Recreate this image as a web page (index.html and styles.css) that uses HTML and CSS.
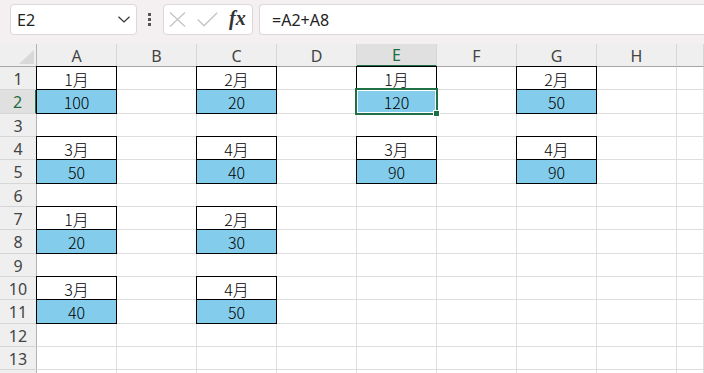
FILE: index.html
```html
<!DOCTYPE html>
<html lang="zh-CN">
<head>
<meta charset="UTF-8">
<meta name="viewport" content="width=device-width, initial-scale=1.0">
<title>工作表</title>
<link rel="stylesheet" href="styles.css">
</head>
<body>

<div class="toolbar">
    <div class="namebox">
        <span>E2</span>
        <svg width="12" height="7" viewBox="0 0 12 7"><path d="M0.5 0.8 L6 6 L11.5 0.8" fill="none" stroke="#333" stroke-width="1.2"/></svg>
    </div>
    <div class="grip"><i></i><i></i><i></i></div>
    <div class="fxbtns">
        <svg width="17" height="15" viewBox="0 0 17 15"><path d="M1 0.5 L16 14.5 M16 0.5 L1 14.5" stroke="#c4c4c4" stroke-width="1.3" fill="none"/></svg>
        <svg width="21" height="15" viewBox="0 0 21 15"><path d="M0.8 7.5 L7 13.8 L20.2 0.8" stroke="#c4c4c4" stroke-width="1.3" fill="none"/></svg>
        <span class="fx">fx</span>
    </div>
    <div class="formula">=A2+A8</div>
</div>

<div class="sheet">
    <div class="corner"><span class="tri"></span></div>
    <div class="ch">A</div><div class="ch">B</div><div class="ch">C</div><div class="ch">D</div>
    <div class="ch on">E</div><div class="ch">F</div><div class="ch">G</div><div class="ch">H</div><div class="ch"></div>

    <div class="rh">1</div>
    <div class="lbl">1月</div><div></div><div class="lbl">2月</div><div></div>
    <div class="lbl">1月</div><div></div><div class="lbl">2月</div><div></div><div></div>

    <div class="rh on">2</div>
    <div class="val">100</div><div></div><div class="val">20</div><div></div>
    <div class="val sel">120</div><div></div><div class="val">50</div><div></div><div></div>

    <div class="rh">3</div>
    <div></div><div></div><div></div><div></div><div></div><div></div><div></div><div></div><div></div>

    <div class="rh">4</div>
    <div class="lbl">3月</div><div></div><div class="lbl">4月</div><div></div>
    <div class="lbl">3月</div><div></div><div class="lbl">4月</div><div></div><div></div>

    <div class="rh">5</div>
    <div class="val">50</div><div></div><div class="val">40</div><div></div>
    <div class="val">90</div><div></div><div class="val">90</div><div></div><div></div>

    <div class="rh">6</div>
    <div></div><div></div><div></div><div></div><div></div><div></div><div></div><div></div><div></div>

    <div class="rh">7</div>
    <div class="lbl">1月</div><div></div><div class="lbl">2月</div><div></div>
    <div></div><div></div><div></div><div></div><div></div>

    <div class="rh">8</div>
    <div class="val">20</div><div></div><div class="val">30</div><div></div>
    <div></div><div></div><div></div><div></div><div></div>

    <div class="rh">9</div>
    <div></div><div></div><div></div><div></div><div></div><div></div><div></div><div></div><div></div>

    <div class="rh">10</div>
    <div class="lbl">3月</div><div></div><div class="lbl">4月</div><div></div>
    <div></div><div></div><div></div><div></div><div></div>

    <div class="rh">11</div>
    <div class="val">40</div><div></div><div class="val">50</div><div></div>
    <div></div><div></div><div></div><div></div><div></div>

    <div class="rh">12</div>
    <div></div><div></div><div></div><div></div><div></div><div></div><div></div><div></div><div></div>

    <div class="rh">13</div>
    <div></div><div></div><div></div><div></div><div></div><div></div><div></div><div></div><div></div>

    <div class="rh"></div>
    <div></div><div></div><div></div><div></div><div></div><div></div><div></div><div></div><div></div>
</div>

</body>
</html>
```

FILE: styles.css
```css
body {
    margin: 0;
    width: 704px;
    height: 373px;
    overflow: hidden;
    background: #fff;
    font-family: "Noto Sans", "Noto Sans CJK SC", sans-serif;
    color: #222;
}

/* formula bar */
.toolbar {
    display: flex;
    height: 44px;
    box-sizing: border-box;
    padding: 4px 0 9px 10px;
    background: #f4eff0;
}
.namebox {
    width: 127px;
    box-sizing: border-box;
    display: flex;
    align-items: center;
    justify-content: space-between;
    padding: 0 6px 0 6px;
    background: #fff;
    border: 1px solid #dcd7d8;
    border-radius: 4px;
    font-size: 16px;
}
.grip {
    width: 26px;
    box-sizing: border-box;
    padding-right: 2px;
    display: flex;
    flex-direction: column;
    align-items: center;
    justify-content: center;
    gap: 2px;
}
.grip i {
    width: 3px;
    height: 3px;
    background: #555;
}
.fxbtns {
    width: 90px;
    box-sizing: border-box;
    display: flex;
    align-items: center;
    gap: 11px;
    padding-left: 5px;
    background: #fff;
    border: 1px solid #dcd7d8;
    border-radius: 4px;
}
.fx {
    font-family: "Liberation Serif", serif;
    font-style: italic;
    font-weight: bold;
    font-size: 20px;
    color: #333;
    margin-top: -2px;
}
.formula {
    flex: 1;
    margin-left: 6px;
    display: flex;
    align-items: center;
    padding-left: 12px;
    background: #fff;
    border: 1px solid #dcd7d8;
    border-right: none;
    border-radius: 4px 0 0 4px;
    font-size: 16px;
}

/* grid */
.sheet {
    display: grid;
    grid-template-columns: 37px repeat(8, 80px) 1fr;
    grid-template-rows: 23px repeat(4, 23px 24px 23px) 23px 24px;
}
.sheet > div {
    box-sizing: border-box;
    display: flex;
    align-items: center;
    justify-content: center;
    border-right: 1px solid #dedede;
    border-bottom: 1px solid #dedede;
    font-family: "Noto Sans CJK SC", sans-serif;
    font-weight: 300;
    font-size: 16px;
    color: #000;
    padding-top: 1px;
}
.sheet > .corner {
    background: #efefef;
    border-right-color: #b4b4b4;
    border-bottom-color: #a6a6a6;
    align-items: flex-end;
    justify-content: flex-end;
    padding: 0 2px 2px 0;
}
.tri {
    width: 0;
    height: 0;
    border-left: 15px solid transparent;
    border-bottom: 14px solid #d9d9d9;
}
.sheet > .ch {
    background: #efefef;
    border-right-color: #d6d6d6;
    border-bottom-color: #a6a6a6;
    color: #444;
    font-family: "Noto Sans", sans-serif;
    font-weight: 400;
    font-size: 16px;
}
.sheet > .ch.on {
    background: #e0e0e0;
    color: #1e6c41;
    border-bottom: 2px solid #1f7145;
}
.sheet > .rh {
    background: #efefef;
    border-right-color: #b4b4b4;
    border-bottom-color: #d6d6d6;
    color: #444;
    font-family: "Noto Sans", sans-serif;
    font-weight: 400;
    font-size: 16px;
}
.sheet > .rh.on {
    background: #e0e0e0;
    color: #1e6c41;
    border-right: 2px solid #1f7145;
}

/* framed data cells */
.lbl, .val {
    position: relative;
}
.lbl::after, .val::after {
    content: "";
    position: absolute;
    top: -1px;
    left: -1px;
    right: -1px;
    bottom: -1px;
    border: 1px solid #000;
}
.sheet > .val {
    background: #83ccec;
}
.sel {
    z-index: 1;
}
.sel::after {
    top: -2px;
    left: -2px;
    right: -2px;
    bottom: -2px;
    border: 2px solid #1f7145;
    box-shadow: inset 0 0 0 1px #fff;
}
.sel::before {
    content: "";
    position: absolute;
    right: -4px;
    bottom: -4px;
    width: 5px;
    height: 5px;
    background: #1f7145;
    border: 1px solid #fff;
    z-index: 1;
}
```
